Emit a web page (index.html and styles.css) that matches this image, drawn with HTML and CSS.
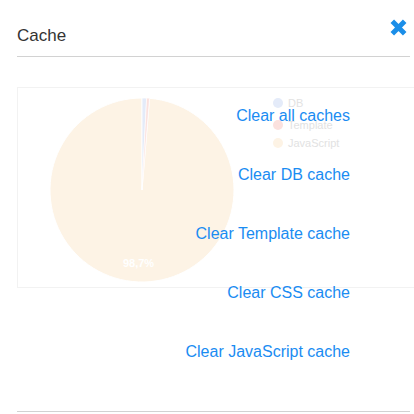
FILE: index.html
```html
<!DOCTYPE html>
<html>
<head>
<meta charset="utf-8">
<link rel="stylesheet" href="styles.css">
</head>
<body>
<div class="modal">
  <div class="modal-header">
    <h3 class="modal-title">Cache</h3>
    <button class="close" aria-label="Close">
      <svg width="17" height="17" viewBox="0 0 17 17"><path d="M2.3 2.3L14.7 14.7M14.7 2.3L2.3 14.7" stroke="#1b8ee8" stroke-width="5" fill="none"/></svg>
    </button>
  </div>
  <div class="modal-body">
    <div class="chart">
      <svg class="pie" width="184" height="184" viewBox="-92 -92 184 184">
        <path d="M0 0L7.54 -91.69A92 92 0 1 1 0 -92Z" fill="#fdf3e5" stroke="#fff" stroke-width="1"/>
        <path d="M0 0L0 -92A92 92 0 0 1 4.65 -91.88Z" fill="#e4ebf9" stroke="#fff" stroke-width="0.8"/>
        <path d="M0 0L4.65 -91.88A92 92 0 0 1 7.54 -91.69Z" fill="#fbe1de" stroke="#fff" stroke-width="0.6"/>
        <text x="-3.5" y="77" text-anchor="middle" class="pie-label">98,7%</text>
      </svg>
      <ul class="legend">
        <li><span class="dot db"></span>DB</li>
        <li><span class="dot tpl"></span>Template</li>
        <li><span class="dot js"></span>JavaScript</li>
      </ul>
    </div>
    <ul class="actions">
      <li><a href="#">Clear all caches</a></li>
      <li><a href="#">Clear DB cache</a></li>
      <li><a href="#">Clear Template cache</a></li>
      <li><a href="#">Clear CSS cache</a></li>
      <li><a href="#">Clear JavaScript cache</a></li>
    </ul>
  </div>
  <div class="modal-footer"></div>
</div>
</body>
</html>
```
FILE: styles.css
```css
html, body {
  margin: 0;
  padding: 0;
  background: #fff;
  overflow: hidden;
}
body {
  font-family: "Liberation Sans", Arial, sans-serif;
  width: 414px;
  height: 414px;
}
.modal {
  padding: 0 4px 0 17px;
}
.modal-header {
  display: flex;
  justify-content: space-between;
  align-items: flex-start;
  height: 56px;
  border-bottom: 1px solid #d2d2d2;
}
.modal-title {
  margin: 26px 0 0 0;
  font-size: 17px;
  line-height: 20px;
  font-weight: normal;
  color: #333;
}
.close {
  margin: 19px 3px 0 0;
  padding: 0;
  border: 0;
  background: none;
  width: 17px;
  height: 17px;
  display: block;
}
.close svg { display: block; }
.modal-body {
  display: grid;
  height: 354px;
  margin-right: -10px;
}
.chart, .actions {
  grid-area: 1 / 1;
}
.chart {
  margin-top: 30px;
  border: 1px solid #f2f2f2;
  border-right: 0;
  align-self: start;
  display: flex;
  align-items: flex-start;
  padding: 10px 0 0 32px;
  box-sizing: border-box;
  height: 201px;
  gap: 39px;
}
.pie { display: block; flex: none; }
.pie-label {
  fill: #fff;
  font-size: 11px;
  font-weight: bold;
  font-family: "Liberation Sans", Arial, sans-serif;
}
.legend {
  list-style: none;
  margin: 0;
  padding: 0;
  display: flex;
  flex-direction: column;
}
.legend li {
  display: flex;
  align-items: center;
  gap: 5px;
  height: 18px;
  font-size: 11px;
  color: #e2e2e2;
}
.legend li:first-child { height: 10px; margin-bottom: 8px; }
.dot {
  width: 10px;
  height: 10px;
  border-radius: 50%;
  flex: none;
}
.dot.db { background: #e4ebf9; }
.dot.tpl { background: #fbe1de; }
.dot.js { background: #fdf3e5; }
.actions {
  list-style: none;
  margin: 0;
  padding: 49px 70px 0 0;
  display: flex;
  flex-direction: column;
  align-items: flex-end;
  gap: 39px;
}
.actions li {
  line-height: 20px;
  font-size: 16px;
}
.actions a {
  color: #1a8cf2;
  text-decoration: none;
}
.modal-footer {
  border-top: 1px solid #d2d2d2;
  height: 3px;
}
```
